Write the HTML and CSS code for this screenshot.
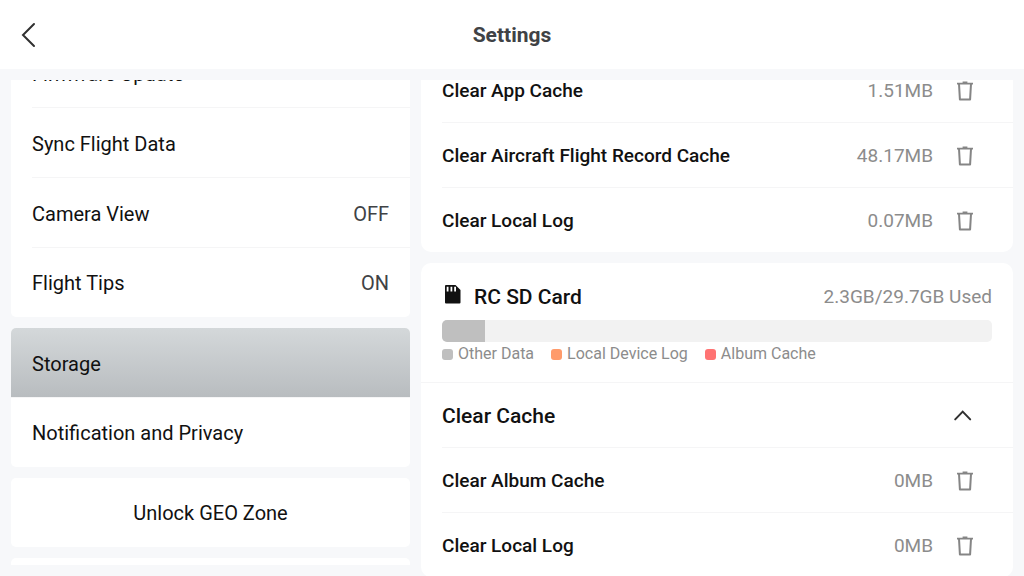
FILE: index.html
```html
<!DOCTYPE html>
<html lang="en">
<head>
  <meta charset="UTF-8">
  <meta name="viewport" content="width=device-width, initial-scale=1.0">
  <title>Settings</title>
  <link rel="stylesheet" href="styles.css">
</head>
<body>
  <!-- shared icons -->
  <svg class="sprite" aria-hidden="true">
    <symbol id="trash" viewBox="0 0 16 20">
      <path d="M0 2.600H16M5.600 1.300H10.400" fill="none" stroke="#858585" stroke-width="1.800"/>
      <path d="M2 2.800L2.900 18.400H13.100L14 2.800" fill="none" stroke="#858585" stroke-width="2" stroke-linejoin="round"/>
    </symbol>
  </svg>

  <header class="top-bar">
    <button class="back-btn" aria-label="Back">
      <svg width="16" height="26" viewBox="0 0 16 26"><path d="M13 2L2 13L13 24" fill="none" stroke="#303030" stroke-width="2" stroke-linecap="round"/></svg>
    </button>
    <h1>Settings</h1>
  </header>

  <main class="content">
    <nav class="menu">
      <div class="menu-list">
        <div class="group">
          <button class="menu-item"><span>Firmware Update</span></button>
          <button class="menu-item"><span>Sync Flight Data</span></button>
          <button class="menu-item"><span>Camera View</span><span class="state">OFF</span></button>
          <button class="menu-item"><span>Flight Tips</span><span class="state">ON</span></button>
        </div>
        <div class="group">
          <button class="menu-item active"><span>Storage</span></button>
          <button class="menu-item"><span>Notification and Privacy</span></button>
        </div>
        <div class="group">
          <button class="menu-item center"><span>Unlock GEO Zone</span></button>
        </div>
        <div class="group">
          <button class="menu-item center" aria-label="More"></button>
        </div>
      </div>
    </nav>

    <section class="details">
      <div class="details-list">
        <div class="card">
          <div class="row">
            <span class="label">Clear App Cache</span>
            <span class="size">1.51MB</span>
            <button class="icon-btn" aria-label="Clear App Cache"><svg width="16" height="20"><use href="#trash"/></svg></button>
          </div>
          <div class="row">
            <span class="label">Clear Aircraft Flight Record Cache</span>
            <span class="size">48.17MB</span>
            <button class="icon-btn" aria-label="Clear Aircraft Flight Record Cache"><svg width="16" height="20"><use href="#trash"/></svg></button>
          </div>
          <div class="row">
            <span class="label">Clear Local Log</span>
            <span class="size">0.07MB</span>
            <button class="icon-btn" aria-label="Clear Local Log"><svg width="16" height="20"><use href="#trash"/></svg></button>
          </div>
        </div>

        <div class="card">
          <div class="storage">
            <div class="storage-head">
              <svg width="22" height="24" viewBox="0 0 22 24">
                <path d="M4 0H13.500L18.500 5V17.500Q18.500 18.500 17.500 18.500H4Q3 18.500 3 17.500V1Q3 0 4 0Z" fill="#111"/>
                <path d="M5.600 1.800V6.500M9.400 1.800V6.500M13.100 1.800V6.500" stroke="#fff" stroke-width="1.800"/>
              </svg>
              <h2>RC SD Card</h2>
              <span class="size">2.3GB/29.7GB Used</span>
            </div>
            <div class="bar"><div class="bar-used" style="width: 7.8%"></div></div>
            <ul class="legend">
              <li><i class="dot other"></i>Other Data</li>
              <li><i class="dot log"></i>Local Device Log</li>
              <li><i class="dot album"></i>Album Cache</li>
            </ul>
          </div>
          <div class="row">
            <h2>Clear Cache</h2>
            <button class="icon-btn" aria-label="Collapse">
              <svg width="20" height="20" viewBox="0 0 20 20"><path d="M2.200 13.400L9.700 5.600L17.200 13.400" fill="none" stroke="#303030" stroke-width="2" stroke-linecap="round"/></svg>
            </button>
          </div>
          <div class="row">
            <span class="label">Clear Album Cache</span>
            <span class="size">0MB</span>
            <button class="icon-btn" aria-label="Clear Album Cache"><svg width="16" height="20"><use href="#trash"/></svg></button>
          </div>
          <div class="row">
            <span class="label">Clear Local Log</span>
            <span class="size">0MB</span>
            <button class="icon-btn" aria-label="Clear Local Log"><svg width="16" height="20"><use href="#trash"/></svg></button>
          </div>
        </div>
      </div>
    </section>
  </main>
</body>
</html>
```
FILE: styles.css
```css
* {
  box-sizing: border-box;
}
body {
  margin: 0;
  height: 100vh;
  display: flex;
  flex-direction: column;
  overflow: hidden;
  background: #f7f8fa;
  color: #111;
  font-family: Roboto, sans-serif;
}
h1, h2 {
  margin: 0;
}
button {
  border: none;
  background: none;
  padding: 0;
  font-family: inherit;
  color: inherit;
  cursor: pointer;
}
svg {
  display: block;
}
.sprite {
  position: absolute;
  width: 0;
  height: 0;
}

/* header */
.top-bar {
  display: grid;
  grid-template-columns: 1fr auto 1fr;
  align-items: center;
  flex: none;
  height: 69px;
  padding: 1px 21px 0;
  background: #fff;
}
.top-bar h1 {
  font-size: 21px;
  line-height: 24px;
  font-weight: 700;
  color: #404245;
}
.back-btn {
  justify-self: start;
}

/* two scrolling columns */
.content {
  flex: 1;
  min-height: 0;
  display: grid;
  grid-template-columns: 399fr 592fr;
  gap: 11px;
  padding: 11px 11px 0;
}
.menu, .details {
  min-height: 0;
  overflow: hidden;
}
.menu {
  margin-bottom: 11px;
}
.menu-list, .details-list {
  display: flex;
  flex-direction: column;
  gap: 11px;
}
.menu-list {
  margin-top: -42px;
}
.details-list {
  margin-top: -22px;
}

/* left menu */
.group {
  flex: none;
  overflow: hidden;
  border-radius: 5px;
  background: #fff;
}
.menu-item {
  position: relative;
  display: flex;
  align-items: center;
  justify-content: space-between;
  width: 100%;
  height: 70px;
  padding: 1px 21px 0;
  font-size: 20px;
  line-height: 24px;
}
.menu-item:last-child {
  height: 69px;
}
.menu-item:not(:last-child)::after,
.row:not(:last-child)::after {
  content: "";
  position: absolute;
  left: 21px;
  right: 0;
  bottom: 0;
  height: 1px;
  background: #f5f5f6;
}
.menu-item.active {
  background: linear-gradient(#d4d8da, #b8bcbf);
}
.menu-item.active::after {
  left: 0;
}
.menu-item.center {
  justify-content: center;
}
.state {
  color: #404245;
}

/* right cards */
.card {
  flex: none;
  border-radius: 10px;
  background: #fff;
}
.row {
  position: relative;
  display: flex;
  align-items: center;
  height: 65px;
  padding: 1px 40px 0 21px;
}
.row:last-child {
  height: 64px;
}
.row h2, .label {
  flex: 1;
}
.label {
  font-size: 19px;
  line-height: 24px;
  font-weight: 500;
}
.card h2 {
  font-size: 21px;
  line-height: 24px;
  font-weight: 500;
}
.size {
  font-size: 19px;
  line-height: 24px;
  color: #8c8c8c;
}
.icon-btn {
  margin-left: 24px;
}
.storage {
  padding: 22px 21px 18px;
  border-bottom: 1px solid #f5f5f6;
}
.storage-head {
  display: flex;
  align-items: center;
  gap: 10px;
}
.storage-head h2 {
  flex: 1;
}
.bar {
  height: 22px;
  margin-top: 11px;
  overflow: hidden;
  border-radius: 5px;
  background: #f2f2f2;
}
.bar-used {
  height: 100%;
  background: #bfbfbf;
}
.legend {
  display: flex;
  gap: 17px;
  margin: 2px 0 0;
  padding: 0;
  list-style: none;
  font-size: 16px;
  line-height: 20px;
  color: #8c8c8c;
}
.legend li {
  display: flex;
  align-items: center;
  gap: 5px;
}
.dot {
  width: 11px;
  height: 11px;
  border-radius: 3px;
}
.dot.other {
  background: #bfbfbf;
}
.dot.log {
  background: #ff9b6b;
}
.dot.album {
  background: #ff7373;
}
```
